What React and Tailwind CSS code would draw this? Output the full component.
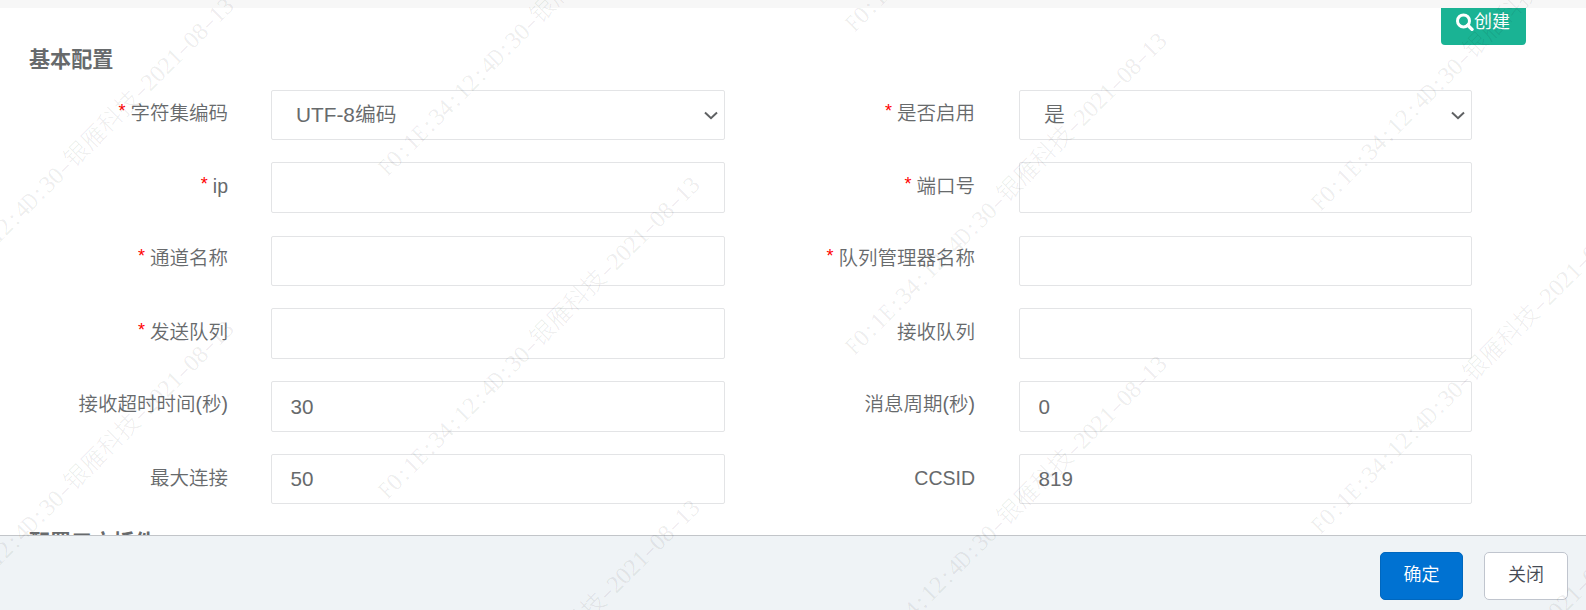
import React from "react";

// Filas del formulario: campo izquierdo y campo derecho
const filas = [
  {
    alto: "h-[50px]",
    margen: "mt-[9px]",
    izquierda: { label: "字符集编码", requerido: true, tipo: "select", valor: "UTF-8编码" },
    derecha: { label: "是否启用", requerido: true, tipo: "select", valor: "是" },
  },
  {
    alto: "h-[51px]",
    margen: "mt-[10px]",
    izquierda: { label: "ip", requerido: true, valor: "" },
    derecha: { label: "端口号", requerido: true, valor: "" },
  },
  {
    alto: "h-[50px]",
    margen: "mt-[8px]",
    izquierda: { label: "通道名称", requerido: true, valor: "" },
    derecha: { label: "队列管理器名称", requerido: true, valor: "" },
  },
  {
    alto: "h-[51px]",
    margen: "mt-[10px]",
    izquierda: { label: "发送队列", requerido: true, valor: "" },
    derecha: { label: "接收队列", valor: "" },
  },
  {
    alto: "h-[51px]",
    margen: "mt-[9px]",
    izquierda: { label: "接收超时时间(秒)", valor: "30" },
    derecha: { label: "消息周期(秒)", valor: "0" },
  },
  {
    alto: "h-[50px]",
    margen: "mt-[10px]",
    izquierda: { label: "最大连接", valor: "50" },
    derecha: { label: "CCSID", valor: "819" },
  },
];

// Origen de cada repetición de la marca de agua
const marcas = [
  [-76, 320],
  [-76, 643],
  [390, 176],
  [390, 499],
  [390, 822],
  [857, 32],
  [857, 355],
  [857, 678],
  [1323, 211],
  [1323, 534],
  [1323, 857],
];

const textoMarca = "F0:1E:34:12:4D:30-银雁科技-2021-08-13";

const claseCaracter = (c) => {
  if (c === "-") return "w-3 scale-x-150 scale-y-75";
  if (c === "D" || c === "E" || c === "F") return "w-3 scale-x-75";
  if (c.charCodeAt(0) > 255) return "w-6";
  return "w-3";
};

const MarcaDeAgua = () => (
  <div className="pointer-events-none absolute inset-0 overflow-hidden">
    {marcas.map(([x, y]) => (
      <div
        key={`${x}-${y}`}
        className="absolute flex h-6 origin-bottom-left -rotate-45 font-['Liberation_Serif','Noto_Sans_CJK_SC',serif] text-[24px] leading-6 font-light text-black/[0.08]"
        style={{ left: x, top: y - 20 }}
      >
        {[...textoMarca].map((c, i) => (
          <span key={i} className={`flex shrink-0 justify-center ${claseCaracter(c)}`}>
            {c}
          </span>
        ))}
      </div>
    ))}
  </div>
);

const Etiqueta = ({ campo, margen }) => (
  <label
    className={`-mr-px text-right text-[19.5px] leading-7 font-[350] whitespace-nowrap ${margen}`}
  >
    {campo.requerido && (
      <span className="mr-[5px] inline-block h-4 align-[3px] text-[18px] leading-4 font-normal text-[#ff0000]">
        *
      </span>
    )}
    {campo.label}
  </label>
);

const Control = ({ campo, alto }) => {
  if (campo.tipo === "select") {
    return (
      <div
        className={`flex items-center justify-between rounded-[2px] border border-[#e3e4e6] bg-white pr-[6px] pl-[24px] text-[20.8px] ${alto}`}
      >
        <span className="font-[350]">{campo.valor}</span>
        <svg className="h-[9px] w-[14px]" viewBox="0 0 14 9" fill="none">
          <path d="M1 1.5L7 7.2L13 1.5" stroke="#5f6163" strokeWidth="2" />
        </svg>
      </div>
    );
  }
  return (
    <input
      type="text"
      defaultValue={campo.valor}
      className={`w-full rounded-[2px] border border-[#e3e4e6] bg-white px-[18.5px] text-[20.6px] outline-none ${alto}`}
    />
  );
};

const App = () => {
  return (
    <div className="relative flex h-[610px] w-[1586px] flex-col overflow-hidden bg-white font-['Liberation_Sans','Noto_Sans_CJK_SC',sans-serif] text-[#676a6c]">
      <div className="h-2 shrink-0 bg-[#f7f7f7]" />

      <main className="h-[527px] shrink-0 overflow-hidden">
        <div className="flex h-[37px] justify-end pr-[60px]">
          <button className="flex h-[37px] w-[85px] items-center justify-center rounded-b-[4px] bg-[#1ab394] pr-px pb-[9px] text-[18px] text-white">
            <svg className="h-[18px] w-[18px]" viewBox="0 0 18 18" fill="none" stroke="currentColor">
              <circle cx="7.5" cy="7.9" r="6" strokeWidth="3" />
              <path d="M11.8 12.3L16 16.4" strokeWidth="3.4" strokeLinecap="round" />
            </svg>
            <span>创建</span>
          </button>
        </div>

        <h4 className="h-[45px] pl-[29px] text-[21.1px] leading-[30px] font-bold">基本配置</h4>

        <div className="grid grid-cols-[227px_498px_249px_498px] grid-rows-[72px_74px_72px_73px_73px_50px] items-start">
          {filas.map((fila) => (
            <React.Fragment key={fila.izquierda.label}>
              <Etiqueta campo={fila.izquierda} margen={fila.margen} />
              <div className="pl-[44px]">
                <Control campo={fila.izquierda} alto={fila.alto} />
              </div>
              <Etiqueta campo={fila.derecha} margen={fila.margen} />
              <div className="pl-[45px]">
                <Control campo={fila.derecha} alto={fila.alto} />
              </div>
            </React.Fragment>
          ))}
        </div>

        <h4 className="mt-[24px] pl-[29px] text-[21.1px] leading-[30px] font-bold">配置三方插件</h4>
      </main>

      {/* Botones del diálogo */}
      <footer className="flex h-[75px] shrink-0 justify-end gap-[21px] border-t border-[#c2c5c9] bg-[#eff3f6] pt-4 pr-[18px] text-[18px] font-[350]">
        <button className="h-12 w-[83px] rounded-[5px] border border-[#0067be] bg-[#0072d2] pb-[2px] text-white">
          确定
        </button>
        <button className="h-12 w-[84px] rounded-[5px] border border-[#c0c5ce] bg-white pb-[2px] text-[#454a54]">
          关闭
        </button>
      </footer>

      <MarcaDeAgua />
    </div>
  );
};

export default App;
